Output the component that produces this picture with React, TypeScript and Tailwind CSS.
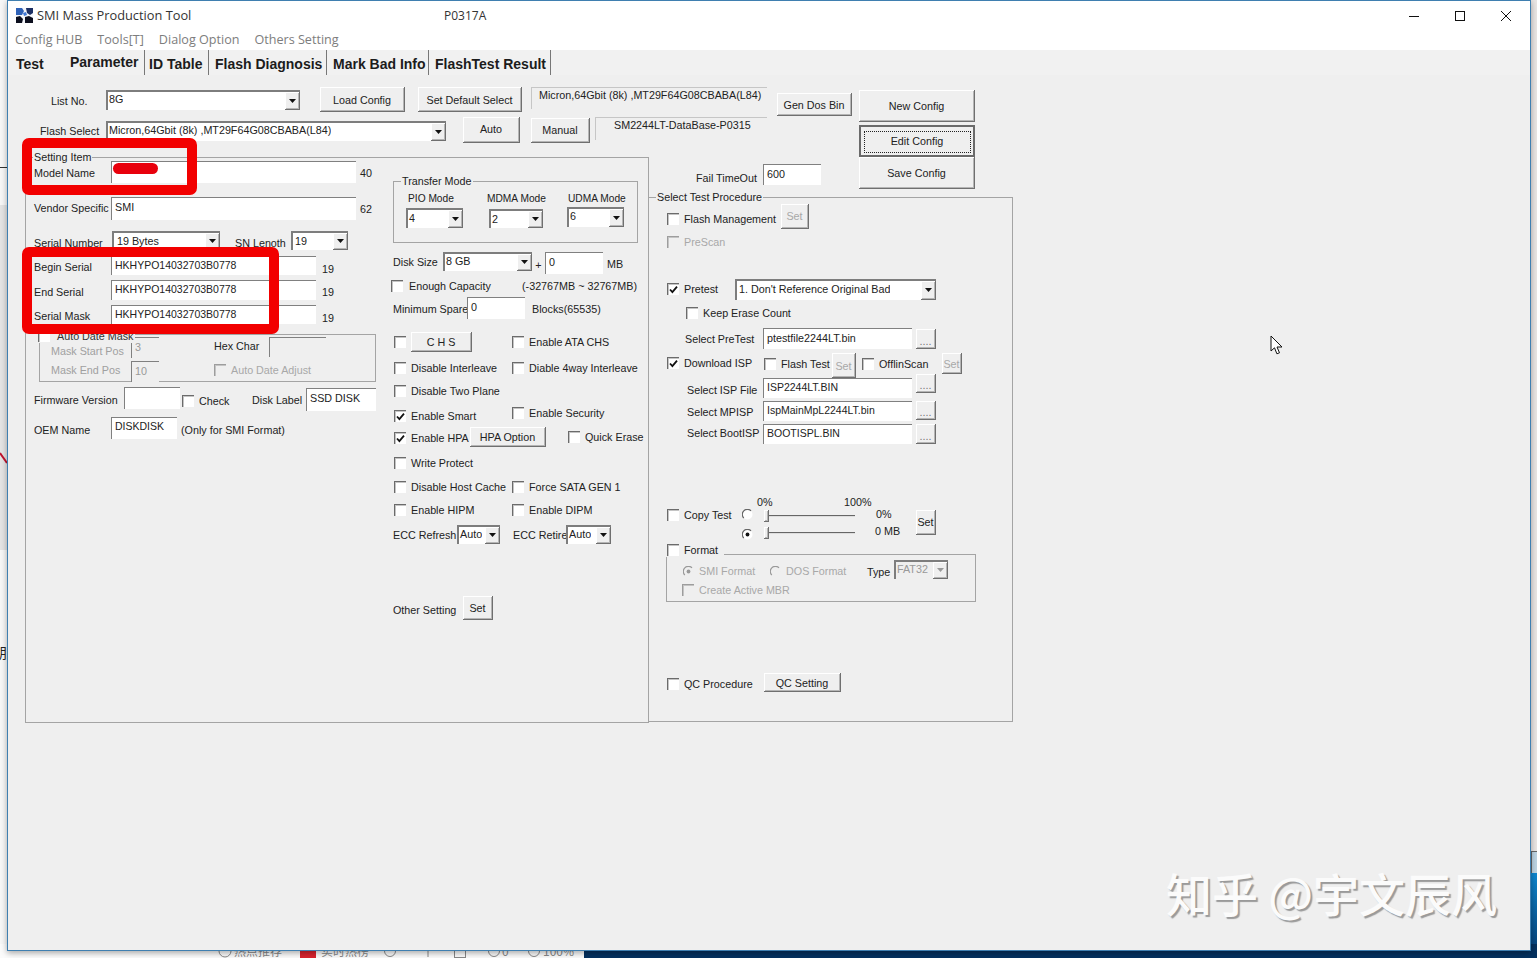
import React from "react";

type P = { className?: string; children?: React.ReactNode };

const T = ({ className = "", children }: P) => (
  <span className={`block shrink-0 whitespace-nowrap leading-[14px] ${className}`}>{children}</span>
);

const Row = ({ className = "", children }: P) => (
  <div className={`flex items-start ${className}`}>{children}</div>
);

const raised =
  "border-r border-b border-r-[#6f6f6f] border-b-[#6f6f6f] [box-shadow:inset_1px_1px_0_#fff,inset_-1px_-1px_0_#b5b5b5]";

const Btn = ({ className = "", children, disabled }: P & { disabled?: boolean }) => (
  <div
    className={`flex shrink-0 items-center justify-center whitespace-nowrap bg-[#efefef] pt-[2px] ${raised} ${
      disabled ? "text-[#a8a8a8]" : "text-[#222]"
    } ${className}`}
  >
    {children}
  </div>
);

const Field = ({
  className = "",
  children,
  disabled,
  tight,
}: P & { disabled?: boolean; tight?: boolean }) => (
  <div
    className={`flex shrink-0 items-start overflow-hidden whitespace-nowrap border-t border-l border-[#808080] pl-[3px] leading-[14px] ${
      tight ? "pt-[1px] text-[10.5px]" : "pt-[2px]"
    } ${disabled ? "bg-[#efefef] text-[#999]" : "bg-white text-[#222]"} ${className}`}
  >
    {children}
  </div>
);

const Arrow = ({ disabled }: { disabled?: boolean }) => (
  <svg width="7" height="4" viewBox="0 0 7 4">
    <path d="M0 0h7L3.5 4z" fill={disabled ? "#9a9a9a" : "#111"} />
  </svg>
);

const Select = ({ className = "", children, disabled }: P & { disabled?: boolean }) => (
  <div
    className={`flex shrink-0 justify-between border-t-2 border-l-2 border-[#7d7d7d] leading-[14px] ${
      disabled ? "bg-[#efefef] text-[#999]" : "bg-white text-[#222]"
    } ${className}`}
  >
    <span className="overflow-hidden whitespace-nowrap pl-[1px]">{children}</span>
    <span className={`flex w-[15px] shrink-0 items-center justify-center bg-[#efefef] ${raised}`}>
      <Arrow disabled={disabled} />
    </span>
  </div>
);

const Low = ({ className = "", children }: P) => (
  <span className={`block pt-[1px] ${className}`}>{children}</span>
);

const Box = ({ checked, disabled, className = "" }: { checked?: boolean; disabled?: boolean; className?: string }) => (
  <span
    className={`flex h-3 w-3 shrink-0 items-center justify-center border-t border-l ${
      disabled ? "border-[#9d9d9d] bg-[#efefef]" : "border-[#6b6b6b] bg-white"
    } [box-shadow:inset_1px_1px_0_#c4c4c4] ${className}`}
  >
    {checked && (
      <svg width="9" height="9" viewBox="0 0 9 9">
        <path d="M1 4.5l2.4 2.6L8 1.6" fill="none" stroke="#111" strokeWidth="1.8" />
      </svg>
    )}
  </span>
);

const Check = ({
  className = "",
  children,
  checked,
  disabled,
}: P & { checked?: boolean; disabled?: boolean }) => (
  <div
    className={`flex h-[14px] shrink-0 items-center gap-[5px] whitespace-nowrap ${
      disabled ? "text-[#a8a8a8]" : ""
    } ${className}`}
  >
    <Box checked={checked} disabled={disabled} />
    {children}
  </div>
);

const Radio = ({ on, disabled }: { on?: boolean; disabled?: boolean }) => (
  <svg width="11" height="11" viewBox="0 0 11 11" className="shrink-0">
    <circle cx="5.5" cy="5.5" r="5" fill={disabled ? "#efefef" : "#fff"} />
    <path d="M9 1.8A5 5 0 0 0 1.8 9" fill="none" stroke={disabled ? "#999" : "#666"} strokeWidth="1.2" />
    {on && <circle cx="5.5" cy="5.5" r="1.9" fill={disabled ? "#9a9a9a" : "#111"} />}
  </svg>
);

const Slider = () => (
  <div className="flex h-[14px] w-[91px] shrink-0 items-center">
    <span className={`h-[12px] w-[5px] shrink-0 bg-[#efefef] ${raised}`} />
    <span className="h-[2px] flex-1 border-t border-[#666] bg-[#ddd]" />
  </div>
);

const Group = ({ className = "", children }: P) => (
  <div className={`relative shrink-0 border border-[#a4a4a4] ${className}`}>{children}</div>
);

const Dots = ({ className = "" }: P) => (
  <Btn className={`w-[20px] text-[#777] ${className}`}>
    <span className="pt-[2px] leading-[10px]">....</span>
  </Btn>
);

function AppIcon() {
  return (
    <svg width="17" height="15" viewBox="0 0 17 15" className="shrink-0">
      <rect width="17" height="15" fill="#f4f6fb" />
      <path d="M0 0h6l2 3-2 4H0z" fill="#2f62b8" />
      <path d="M10 0h7v5l-3 2-3-2z" fill="#1c2f63" />
      <path d="M0 9l4-1 3 3-1 4H0z" fill="#0c0f1e" />
      <path d="M9 9l4-1 4 2v5H9z" fill="#0c0f1e" />
      <path d="M7 5l3-1 1 3-3 1z" fill="#3f78d6" />
    </svg>
  );
}

function Header() {
  return (
    <div className="flex h-[72px] items-start pl-[17px]">
      <div className="w-[742px] shrink-0">
        <Row className="h-[33px]">
          <T className="ml-[26px] mt-[9px] w-[55px]">List No.</T>
          <Select className="mt-[5px] h-[20px] w-[194px]">8G</Select>
          <Btn className="ml-[20px] mt-[2px] h-[25px] w-[85px]">Load Config</Btn>
          <Btn className="ml-[13px] mt-[2px] h-[25px] w-[104px]">Set Default Select</Btn>
          <div className="ml-[9px] mt-[2px] h-[22px] w-[236px] shrink-0 whitespace-nowrap border-t border-l border-[#c6c6c6] pl-[7px] leading-[14px]">
            Micron,64Gbit (8k) ,MT29F64G08CBABA(L84)
          </div>
        </Row>
        <Row className="h-[39px]">
          <T className="ml-[15px] mt-[6px] w-[66px]">Flash Select</T>
          <Select className="mt-[3px] h-[20px] w-[340px]">Micron,64Gbit (8k) ,MT29F64G08CBABA(L84)</Select>
          <Btn className="-mt-[1px] ml-[17px] h-[26px] w-[57px] pb-[2px]">Auto</Btn>
          <Btn className="ml-[11px] h-[25px] w-[59px] pb-[2px]">Manual</Btn>
          <div className="-mt-[1px] ml-[5px] h-[23px] w-[172px] shrink-0 whitespace-nowrap border-t border-l border-[#c6c6c6] pl-[18px] leading-[14px]">
            SM2244LT-DataBase-P0315
          </div>
        </Row>
      </div>
      <Btn className="ml-[10px] mt-[8px] h-[23px] w-[75px]">Gen Dos Bin</Btn>
      <div className="ml-[7px] mt-[5px] flex w-[116px] shrink-0 flex-col">
        <Btn className="h-[32px] w-full">New Config</Btn>
        <div className="mt-[3px] flex h-[32px] w-full items-center justify-center border-2 border-[#6a6a6a] bg-[#efefef] pt-[1px]">
          <div className="flex h-[22px] w-[107px] items-center justify-center border border-dotted border-[#222]">
            Edit Config
          </div>
        </div>
        <Btn className="h-[32px] w-full">Save Config</Btn>
      </div>
    </div>
  );
}

function LeftForm() {
  return (
    <div className="w-[367px] shrink-0 pl-[8px]">
      <Row className="h-[33px]">
        <T className="mt-[8px] w-[77px]">Model Name</T>
        <Field className="mt-[3px] h-[22px] w-[245px]" />
        <T className="ml-[4px] mt-[8px]">40</T>
      </Row>
      <Row className="h-[34px]">
        <T className="mt-[10px] w-[77px]">Vendor Specific</T>
        <Field className="mt-[6px] h-[23px] w-[245px]">SMI</Field>
        <T className="ml-[4px] mt-[11px]">62</T>
      </Row>
      <Row className="h-[25px]">
        <T className="mt-[11px] w-[78px]">Serial Number</T>
        <Select className="mt-[6px] h-[19px] w-[108px]">
          <Low className="pl-[2px]">19 Bytes</Low>
        </Select>
        <T className="ml-[15px] mt-[11px] w-[56px]">SN Lenoth</T>
        <Select className="mt-[6px] h-[19px] w-[57px]">
          <Low className="pl-[1px]">19</Low>
        </Select>
      </Row>
      <Row className="h-[28px]">
        <T className="mt-[10px] w-[77px]">Begin Serial</T>
        <Field tight className="mt-[6px] h-[19px] w-[205px]">HKHYPO14032703B0778</Field>
        <T className="ml-[6px] mt-[12px]">19</T>
      </Row>
      <Row className="h-[25px]">
        <T className="mt-[7px] w-[77px]">End Serial</T>
        <Field tight className="mt-[2px] h-[20px] w-[205px]">HKHYPO14032703B0778</Field>
        <T className="ml-[6px] mt-[7px]">19</T>
      </Row>
      <Row className="h-[31px]">
        <T className="mt-[6px] w-[77px]">Serial Mask</T>
        <Field tight className="mt-[2px] h-[19px] w-[205px]">HKHYPO14032703B0778</Field>
        <T className="ml-[6px] mt-[8px]">19</T>
      </Row>
      <Group className="ml-[5px] h-[48px] w-[337px]">
        <Check className="absolute -left-[2px] -top-[6px] bg-[#efefef] pr-[2px]">
          <span className="ml-[2px] text-[#333]">Auto Date Mask</span>
        </Check>
        <Row className="h-[25px]">
          <T className="ml-[11px] mt-[9px] w-[80px] text-[#a0a0a0]">Mask Start Pos</T>
          <Field className="mt-[2px] h-[21px] w-[28px]" disabled>3</Field>
          <T className="ml-[55px] mt-[4px] w-[55px]">Hex Char</T>
          <Field className="mt-[2px] h-[20px] w-[57px]" disabled />
        </Row>
        <Row className="h-[21px]">
          <T className="ml-[11px] mt-[3px] w-[80px] text-[#a0a0a0]">Mask End Pos</T>
          <Field className="mt-[1px] h-[21px] w-[28px]" disabled>10</Field>
          <Check className="ml-[55px] mt-[3px]" disabled>Auto Date Adjust</Check>
        </Row>
      </Group>
      <Row className="h-[32px]">
        <T className="mt-[11px] w-[90px]">Firmware Version</T>
        <Field className="mt-[5px] h-[22px] w-[56px]" />
        <Check className="ml-[2px] mt-[12px] w-[70px]">Check</Check>
        <T className="mt-[11px] w-[54px]">Disk Label</T>
        <Field className="mt-[6px] h-[23px] w-[70px]">SSD DISK</Field>
      </Row>
      <Row>
        <T className="mt-[9px] w-[77px]">OEM Name</T>
        <Field tight className="mt-[3px] h-[22px] w-[66px]">DISKDISK</Field>
        <T className="ml-[4px] mt-[9px]">(Only for SMI Format)</T>
      </Row>
    </div>
  );
}

function MidForm() {
  return (
    <div className="w-[255px] shrink-0">
      <Group className="mt-[23px] h-[62px] w-[245px]">
        <T className="absolute -top-[8px] left-[7px] bg-[#efefef] px-[1px]">Transfer Mode</T>
        <Row className="mt-[10px] h-[14px] text-[10.2px]">
          <T className="ml-[14px] w-[79px]">PIO Mode</T>
          <T className="w-[81px]">MDMA Mode</T>
          <T>UDMA Mode</T>
        </Row>
        <Row>
          <Select className="ml-[12px] mt-[2px] h-[20px] w-[57px]"><Low>4</Low></Select>
          <Select className="ml-[26px] mt-[3px] h-[19px] w-[54px]"><Low>2</Low></Select>
          <Select className="ml-[24px] mt-[1px] h-[20px] w-[57px]">6</Select>
        </Row>
      </Group>
      <Row className="h-[33px]">
        <T className="mt-[12px] w-[50px]">Disk Size</T>
        <Select className="mt-[9px] h-[19px] w-[89px]">8 GB</Select>
        <T className="mt-[15px] w-[13px] text-center">+</T>
        <Field className="mt-[9px] h-[22px] w-[58px]">0</Field>
        <T className="ml-[4px] mt-[14px]">MB</T>
      </Row>
      <Row className="h-[20px]">
        <Check className="-ml-[2px] mt-[3px] w-[131px]">
          <span className="ml-[1px]">Enough Capacity</span>
        </Check>
        <T className="mt-[3px]">(-32767MB ~ 32767MB)</T>
      </Row>
      <Row className="h-[26px]">
        <T className="mt-[6px] w-[74px]">Minimum Spare</T>
        <Field className="mt-[1px] h-[22px] w-[58px]">0</Field>
        <T className="ml-[7px] mt-[6px]">Blocks(65535)</T>
      </Row>
      <Row className="h-[33px]">
        <Box className="ml-[1px] mt-[14px]" />
        <Btn className="ml-[5px] mt-[10px] h-[20px] w-[61px]">C H S</Btn>
        <Check className="ml-[40px] mt-[13px]">Enable ATA CHS</Check>
      </Row>
      <Row className="h-[25px]">
        <Check className="ml-[1px] mt-[6px] w-[118px]">Disable Interleave</Check>
        <Check className="mt-[6px]">Diable 4way Interleave</Check>
      </Row>
      <Row className="h-[23px]">
        <Check className="ml-[1px] mt-[4px]">Disable Two Plane</Check>
      </Row>
      <Row className="h-[24px]">
        <Check className="ml-[1px] mt-[6px] w-[118px]" checked>Enable Smart</Check>
        <Check className="mt-[3px]">Enable Security</Check>
      </Row>
      <Row className="h-[25px]">
        <Check className="ml-[1px] mt-[4px] w-[76px]" checked>Enable HPA</Check>
        <Btn className="h-[20px] w-[76px]">HPA Option</Btn>
        <Check className="ml-[22px] mt-[3px]">Quick Erase</Check>
      </Row>
      <Row className="h-[23px]">
        <Check className="ml-[1px] mt-[4px]">Write Protect</Check>
      </Row>
      <Row className="h-[23px]">
        <Check className="ml-[1px] mt-[5px] w-[118px]">Disable Host Cache</Check>
        <Check className="mt-[5px]">Force SATA GEN 1</Check>
      </Row>
      <Row className="h-[24px]">
        <Check className="ml-[1px] mt-[5px] w-[118px]">Enable HIPM</Check>
        <Check className="mt-[5px]">Enable DIPM</Check>
      </Row>
      <Row className="h-[28px]">
        <T className="mt-[6px] w-[64px]">ECC Refresh</T>
        <Select className="mt-[3px] h-[19px] w-[43px]">Auto</Select>
        <T className="ml-[13px] mt-[6px] w-[53px]">ECC Retire</T>
        <Select className="mt-[3px] h-[19px] w-[45px]">Auto</Select>
      </Row>
      <Row className="mt-[46px]">
        <T className="mt-[7px] w-[70px]">Other Setting</T>
        <Btn className="h-[24px] w-[30px]">Set</Btn>
      </Row>
    </div>
  );
}

function RightPanel() {
  return (
    <div className="w-[365px] shrink-0">
      <Row className="h-[40px]">
        <T className="ml-[48px] mt-[14px] w-[67px]">Fail TimeOut</T>
        <Field className="mt-[7px] h-[21px] w-[58px]">600</Field>
      </Row>
      <Group className="h-[525px] w-[365px]">
        <T className="absolute -top-[8px] left-[7px] bg-[#efefef] px-[1px]">Select Test Procedure</T>
        <Row className="h-[34px] pl-[18px]">
          <Check className="mt-[14px] w-[114px]">Flash Management</Check>
          <Btn className="mt-[6px] h-[25px] w-[28px] pb-[2px]" disabled>Set</Btn>
        </Row>
        <Row className="h-[20px] pl-[18px]">
          <Check className="mt-[3px]" disabled>PreScan</Check>
        </Row>
        <Row className="mt-[24px] h-[27px] pl-[18px]">
          <Check className="mt-[6px] w-[68px]" checked>Pretest</Check>
          <Select className="mt-[3px] h-[21px] w-[201px]">
            <Low className="pl-[1px]">1. Don&apos;t Reference Original Bad</Low>
          </Select>
        </Row>
        <Row className="h-[20px] pl-[37px]">
          <Check className="mt-[3px]">Keep Erase Count</Check>
        </Row>
        <Row className="h-[29px] pl-[36px]">
          <T className="mt-[9px] w-[78px]">Select PreTest</T>
          <Field className="mt-[5px] h-[21px] w-[149px]">ptestfile2244LT.bin</Field>
          <Dots className="ml-[4px] mt-[6px] h-[20px]" />
        </Row>
        <Row className="h-[26px] pl-[18px]">
          <Check className="mt-[4px] w-[97px]" checked>Download ISP</Check>
          <Check className="mt-[5px] w-[68px]">Flash Test</Check>
          <Btn className="mt-[1px] h-[25px] w-[24px]" disabled>Set</Btn>
          <Check className="ml-[6px] mt-[5px] w-[80px]">OfflinScan</Check>
          <Btn className="mt-[1px] h-[21px] w-[20px]" disabled>Set</Btn>
        </Row>
        <Row className="h-[22px] pl-[38px]">
          <T className="mt-[5px] w-[76px]">Select ISP File</T>
          <Field tight className="h-[20px] w-[149px]">ISP2244LT.BIN</Field>
          <Dots className="-mt-[4px] ml-[4px] h-[19px]" />
        </Row>
        <Row className="h-[23px] pl-[38px]">
          <T className="mt-[5px] w-[76px]">Select MPISP</T>
          <Field tight className="mt-[1px] h-[20px] w-[149px]">IspMainMpL2244LT.bin</Field>
          <Dots className="ml-[4px] mt-[1px] h-[19px]" />
        </Row>
        <Row className="h-[23px] pl-[38px]">
          <T className="mt-[3px] w-[76px]">Select BootISP</T>
          <Field tight className="mt-[1px] h-[20px] w-[149px]">BOOTISPL.BIN</Field>
          <Dots className="ml-[4px] mt-[1px] h-[20px]" />
        </Row>
        <Row className="mt-[49px] h-[14px]">
          <T className="ml-[108px] w-[87px]">0%</T>
          <T>100%</T>
        </Row>
        <Row className="h-[16px] pl-[18px]">
          <Check className="-mt-[1px] w-[75px]">Copy Test</Check>
          <span className="w-[22px] shrink-0">
            <Radio />
          </span>
          <Slider />
          <T className="ml-[21px] -mt-[2px] w-[40px]">0%</T>
          <Btn className="mt-[1px] h-[25px] w-[20px] pb-[2px]">Set</Btn>
        </Row>
        <Row className="h-[16px] pl-[93px]">
          <span className="mt-[4px] w-[22px] shrink-0">
            <Radio on />
          </span>
          <div className="mt-[1px]">
            <Slider />
          </div>
          <T className="ml-[20px] -mt-[1px]">0 MB</T>
        </Row>
        <Row className="relative z-10 h-[13px] pl-[17px]">
          <Check className="mt-[2px] bg-[#efefef] pl-[1px] pr-[6px]">Format</Check>
        </Row>
        <Group className="ml-[17px] h-[48px] w-[310px]">
          <Row className="h-[26px]">
            <div className="ml-[16px] mt-[9px] flex w-[87px] shrink-0 items-center gap-[5px] leading-[14px] text-[#a8a8a8]">
              <Radio on disabled />
              SMI Format
            </div>
            <div className="mt-[9px] flex w-[97px] shrink-0 items-center gap-[5px] leading-[14px] text-[#a8a8a8]">
              <Radio disabled />
              DOS Format
            </div>
            <T className="mt-[10px] w-[27px]">Type</T>
            <Select className="mt-[5px] h-[19px] w-[54px]" disabled>FAT32</Select>
          </Row>
          <Row>
            <Check className="ml-[15px] mt-[2px]" disabled>Create Active MBR</Check>
          </Row>
        </Group>
        <Row className="mt-[71px] pl-[18px]">
          <Check className="mt-[4px] w-[97px]">QC Procedure</Check>
          <Btn className="h-[19px] w-[77px]">QC Setting</Btn>
        </Row>
      </Group>
    </div>
  );
}

export default function App() {
  const tabText =
    "whitespace-nowrap font-['Liberation_Sans',sans-serif] text-[14px] font-bold leading-[18px] text-[#1c1c1c]";
  return (
    <div className="relative h-[958px] w-[1537px] overflow-hidden bg-[#f7f7f7] font-['Liberation_Sans',sans-serif] text-[10.75px] text-[#222]">
      <div className="absolute left-0 top-[205px] h-[345px] w-[7px] bg-[#e4e4e4]" />
      <div className="absolute left-[0px] top-[167px] h-[1px] w-[7px] bg-[#333]" />
      <svg className="absolute left-0 top-[452px]" width="8" height="14" viewBox="0 0 8 14">
        <path d="M0 1l7 10" stroke="#c0122c" strokeWidth="2" fill="none" />
      </svg>
      <span className="absolute -left-[7px] top-[643px] font-['Noto_Sans_CJK_SC',sans-serif] text-[14px] leading-[18px] text-[#222]">
        朋
      </span>
      <div className="absolute right-0 top-0 h-[851px] w-[6px] bg-[#e9e5e3]" />
      <div className="absolute right-0 top-[851px] h-[22px] w-[6px] border-t border-l border-[#666] bg-[#bcd3e2]" />
      <div className="absolute right-0 top-[873px] h-[85px] w-[6px] bg-gradient-to-b from-[#0d86cf] to-[#063a70]" />

      <div className="relative z-10 ml-[7px] flex h-[951px] w-[1524px] flex-col border border-[#3f7fb0] bg-[#efefef] [box-shadow:0_2px_6px_#0005]">
        <div className="flex h-[29px] shrink-0 items-center bg-white pl-[8px] font-['Open_Sans',sans-serif] text-[12.8px] text-[#333]">
          <AppIcon />
          <span className="ml-[4px] w-[407px] shrink-0">SMI Mass Production Tool</span>
          <span className="text-[12px]">P0317A</span>
          <div className="ml-auto flex items-center">
            <svg width="12" height="12" viewBox="0 0 12 12" className="mr-[34px]">
              <path d="M1 6.5h10" stroke="#111" strokeWidth="1" />
            </svg>
            <svg width="12" height="12" viewBox="0 0 12 12" className="mr-[34px]">
              <rect x="1.5" y="1.5" width="9" height="9" fill="none" stroke="#111" />
            </svg>
            <svg width="12" height="12" viewBox="0 0 12 12" className="mr-[18px]">
              <path d="M1 1l10 10M11 1L1 11" stroke="#111" />
            </svg>
          </div>
        </div>
        <div className="flex h-[20px] shrink-0 items-center gap-[15px] bg-white pl-[7px] pt-[1px] font-['Open_Sans',sans-serif] text-[12.6px] text-[#7d7d7d]">
          <span>Config HUB</span>
          <span>Tools[T]</span>
          <span>Dialog Option</span>
          <span>Others Setting</span>
        </div>
        <div className="flex h-[25px] shrink-0 items-start bg-[#f1f1f1]">
          <span className={`ml-[8px] mt-[5px] w-[46px] shrink-0 ${tabText}`}>Test</span>
          <div className="flex h-[25px] w-[83px] shrink-0 border-r border-[#777] pl-[8px] pt-[3px]">
            <span className={tabText}>Parameter</span>
          </div>
          <div className="flex h-[25px] w-[64px] shrink-0 border-r border-[#777] pl-[4px] pt-[5px]">
            <span className={tabText}>ID Table</span>
          </div>
          <div className="flex h-[25px] w-[118px] shrink-0 border-r border-[#777] pl-[6px] pt-[5px]">
            <span className={tabText}>Flash Diagnosis</span>
          </div>
          <div className="flex h-[25px] w-[102px] shrink-0 border-r border-[#777] pl-[6px] pt-[5px]">
            <span className={tabText}>Mark Bad Info</span>
          </div>
          <div className="flex h-[25px] w-[122px] shrink-0 border-r border-[#777] pl-[6px] pt-[5px]">
            <span className={tabText}>FlashTest Result</span>
          </div>
        </div>
        <div className="flex-1 pt-[10px]">
          <Header />
          <div className="flex items-start pl-[17px]">
            <Group className="flex h-[566px] w-[624px]">
              <T className="absolute -top-[8px] left-[7px] bg-[#efefef] px-[1px]">Setting Item</T>
              <LeftForm />
              <MidForm />
            </Group>
            <div className="-ml-[1px]">
              <RightPanel />
            </div>
          </div>
        </div>
      </div>

      <div className="relative -mt-[7px] flex h-[14px] items-start">
        <div className="flex h-[14px] w-[584px] shrink-0 items-center bg-[#fbfbfb] font-['Noto_Sans_CJK_SC',sans-serif] text-[12px] leading-[14px] text-[#888]">
          <svg width="14" height="14" viewBox="0 0 14 14" className="ml-[218px] shrink-0">
            <circle cx="7" cy="7" r="6" fill="none" stroke="#888" />
          </svg>
          <span className="ml-[2px] w-[66px] shrink-0">热点推荐</span>
          <span className="h-[14px] w-[16px] shrink-0 bg-[#d9232e]" />
          <span className="ml-[5px] w-[60px] shrink-0">实时热榜</span>
          <svg width="12" height="14" viewBox="0 0 12 14" className="ml-[3px] shrink-0">
            <circle cx="6" cy="7" r="5.5" fill="none" stroke="#888" />
          </svg>
          <svg width="14" height="14" viewBox="0 0 14 14" className="ml-[22px] shrink-0">
            <path d="M1 5h4l5-4v12" fill="none" stroke="#888" />
          </svg>
          <span className="ml-[22px] h-[14px] w-[12px] shrink-0 border border-[#888]" />
          <svg width="12" height="14" viewBox="0 0 12 14" className="ml-[22px] shrink-0">
            <circle cx="6" cy="7" r="5.5" fill="none" stroke="#888" />
          </svg>
          <span className="ml-[2px] w-[26px] shrink-0">0</span>
          <svg width="12" height="14" viewBox="0 0 12 14" className="shrink-0">
            <circle cx="6" cy="7" r="5.5" fill="none" stroke="#888" />
          </svg>
          <span className="ml-[3px]">100%</span>
        </div>
        <div className="h-[14px] flex-1 bg-[#04315f]" />
      </div>

      {/* Red hand-drawn annotations over the screenshot */}
      <div className="absolute left-[22px] top-[138px] z-20 h-[57px] w-[175px] rounded-[7px] border-[10px] border-[#f20000]" />
      <div className="absolute left-[22px] top-[247px] z-20 h-[87px] w-[257px] rounded-[7px] border-[10px] border-[#f20000]" />
      <div className="absolute left-[113px] top-[163px] z-20 h-[11px] w-[45px] rounded-full bg-[#e8000c]" />

      {/* Watermark */}
      <div className="absolute left-[1166px] top-[860px] z-20 whitespace-nowrap font-['Noto_Sans_CJK_SC',sans-serif] text-[46px] font-medium leading-[64px] text-[#fbfbfb] [text-shadow:2px_2px_1px_#9a9a9a]">
        知乎 @宇文辰风
      </div>

      {/* Mouse cursor */}
      <svg className="absolute left-[1270px] top-[335px] z-20" width="13" height="20" viewBox="0 0 13 20">
        <path d="M1 1v15l3.5-3.2 2.4 6 2.6-1-2.5-5.8H12z" fill="#fff" stroke="#111" />
      </svg>
    </div>
  );
}
